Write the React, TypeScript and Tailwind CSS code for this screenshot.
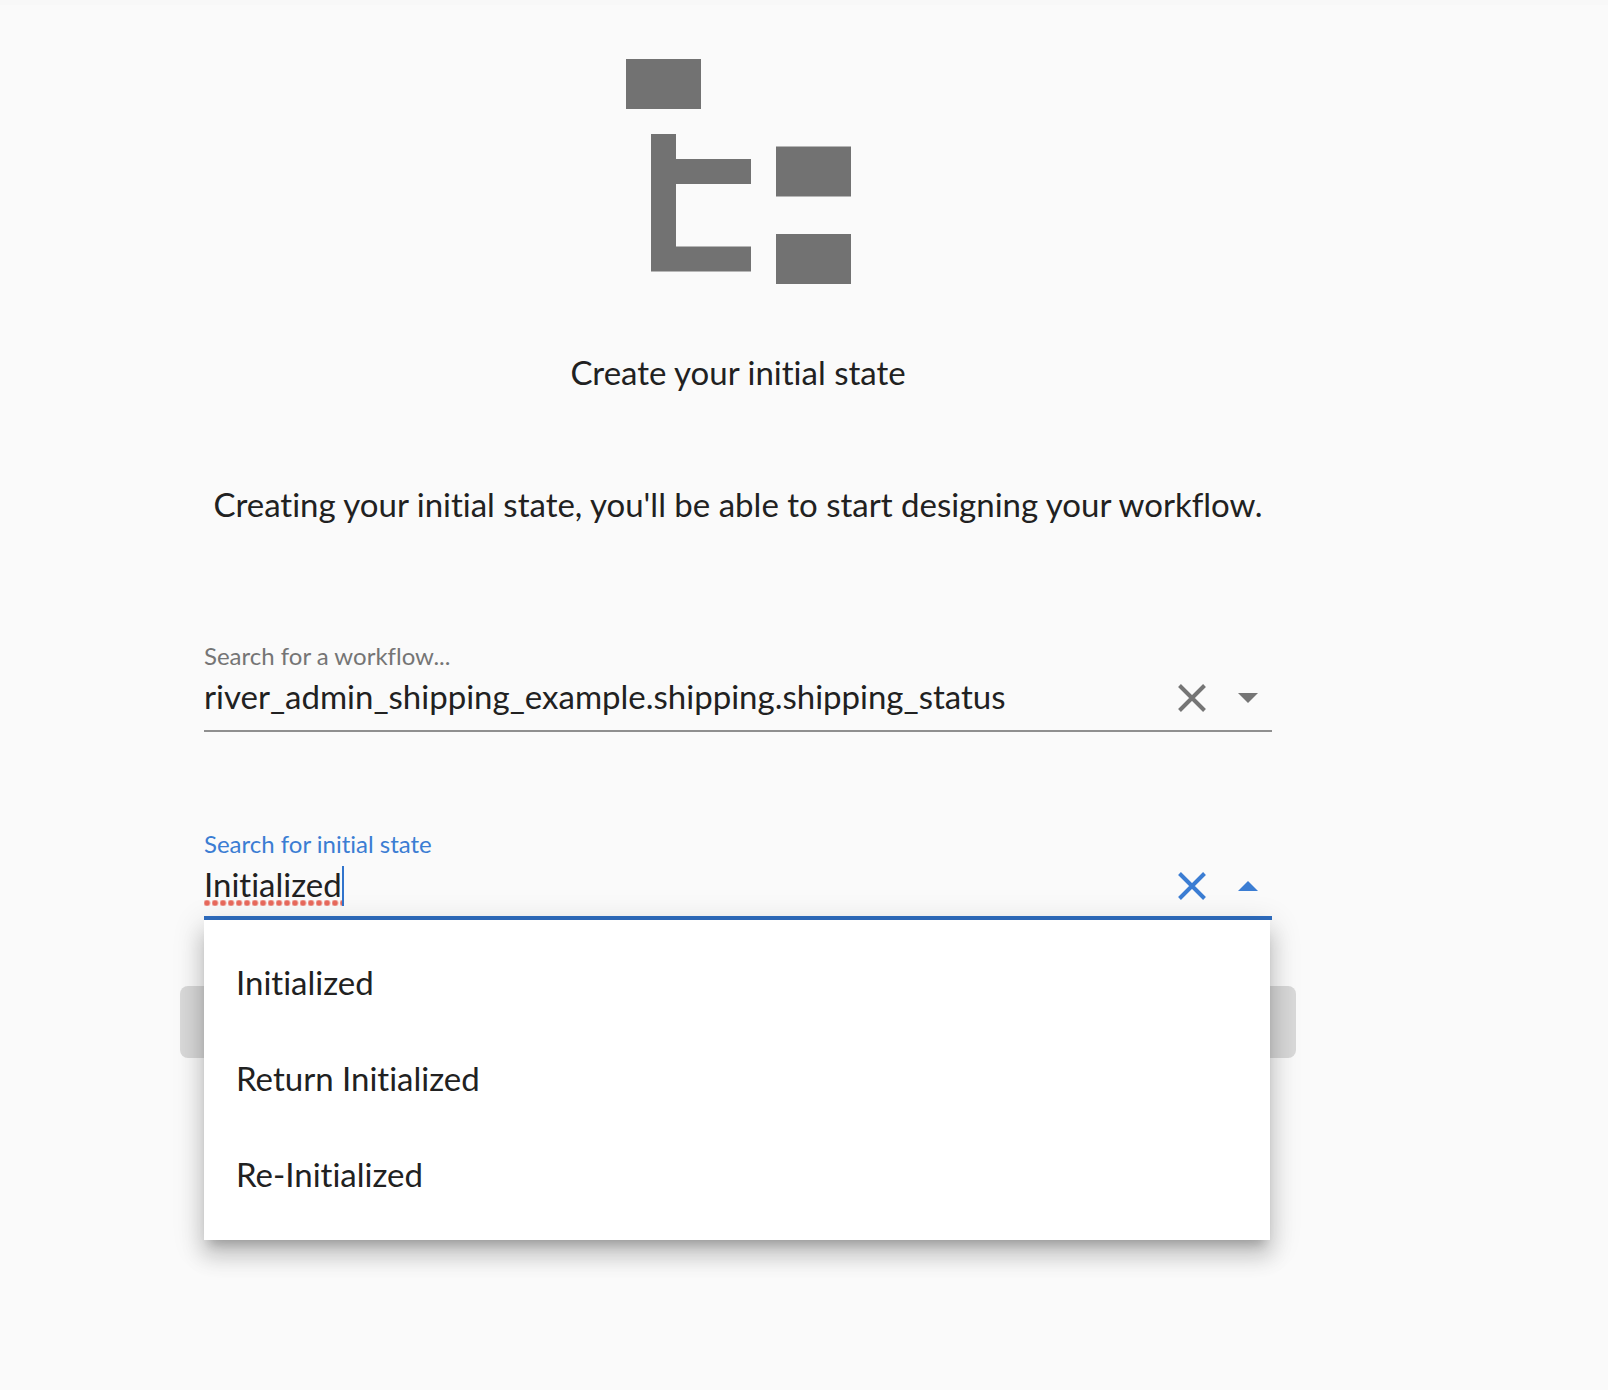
import { useId, type ReactNode } from "react";

const options = ["Initialized", "Return Initialized", "Re-Initialized"];

function FileTreeIcon() {
  return (
    <svg viewBox="3 3 18 18" className="size-[225px] text-[#727272]" fill="currentColor" aria-hidden="true">
      <path d="M3 3H9V7H3ZM15 10H21V14H15ZM15 17H21V21H15ZM13 13H7V18H13V20H5V9H7V11H13Z" />
    </svg>
  );
}

function ClearIcon() {
  return (
    <svg viewBox="0 0 28 28" className="size-7" fill="none" stroke="currentColor" strokeWidth="4" aria-hidden="true">
      <path d="M1.5 1.5L26.5 26.5M26.5 1.5L1.5 26.5" />
    </svg>
  );
}

function CaretIcon({ open }: { open: boolean }) {
  return (
    <svg viewBox="0 0 20 10" className="h-[10px] w-5" fill="currentColor" aria-hidden="true">
      <path d={open ? "M0 10L10 0L20 10Z" : "M0 0L10 10L20 0Z"} />
    </svg>
  );
}

type FieldProps = {
  label: string;
  value: string;
  active?: boolean;
  children?: ReactNode;
};

function SearchField({ label, value, active = false, children }: FieldProps) {
  const id = useId();
  return (
    <div className={active ? "relative text-[#3b7dd3]" : "relative text-[#757575]"}>
      <label htmlFor={id} className="block text-2xl leading-8">
        {label}
      </label>
      <div
        className={
          active
            ? "flex h-[60px] items-start border-b-4 border-[#2f6dc0]"
            : "flex h-[60px] items-start border-b-2 border-[#8f8f8f]"
        }
      >
        <div className="flex min-w-0 flex-1 items-start">
          <div className="relative min-w-0">
            <input
              id={id}
              type="text"
              defaultValue={value}
              spellCheck={false}
              className="block h-12 max-w-full bg-transparent text-[33px] leading-[48px] text-[#212121] caret-transparent outline-none field-sizing-content"
            />
            {active && (
              <span className="absolute inset-x-0 bottom-[2px] h-[6px] bg-[radial-gradient(circle_at_3px_3px,#e8695c_0,#e8695c_2px,transparent_4px)] bg-[length:8px_6px] bg-repeat-x" />
            )}
          </div>
          {active && <span className="mt-[6px] h-10 w-[2px] bg-[#3174cc]" />}
        </div>
        <div className="flex h-[52px] items-center gap-8 pr-[14px]">
          <button type="button" aria-label="Clear">
            <ClearIcon />
          </button>
          <button type="button" aria-label={active ? "Close list" : "Open list"} className="flex h-7 items-center">
            <CaretIcon open={active} />
          </button>
        </div>
      </div>
      {children}
    </div>
  );
}

export default function App() {
  return (
    <main className="min-h-screen border-t-[5px] border-[#f8f8f8] bg-[#fafafa] pt-[54px] pr-[312px] pl-[180px] font-['Lato',sans-serif] text-[33px] leading-[48px] text-[#212121] [font-variant-ligatures:none]">
      <div className="flex flex-col items-center">
        <FileTreeIcon />
        <h1 className="mt-16">Create your initial state</h1>
        <p className="mt-[84px] whitespace-nowrap">
          Creating your initial state, you'll be able to start designing your workflow.
        </p>
      </div>
      <form className="mt-[112px]">
        <div className="flex flex-col gap-24 px-6">
          <SearchField label="Search for a workflow..." value="river_admin_shipping_example.shipping.shipping_status" />
          <SearchField label="Search for initial state" value="Initialized" active>
            <ul
              role="listbox"
              className="absolute top-full right-[2px] left-0 bg-white py-4 text-[#212121] shadow-[0_10px_10px_-6px_rgba(0,0,0,0.2),0_16px_20px_2px_rgba(0,0,0,0.14),0_6px_28px_4px_rgba(0,0,0,0.12)]"
            >
              {options.map((option) => (
                <li key={option} role="option" aria-selected={false} className="px-8 pt-[22px] pb-[26px]">
                  {option}
                </li>
              ))}
            </ul>
          </SearchField>
        </div>
        <button type="submit" disabled aria-label="Create" className="mt-[66px] block h-[72px] w-full rounded-lg bg-[#d9d9d9]" />
      </form>
    </main>
  );
}
